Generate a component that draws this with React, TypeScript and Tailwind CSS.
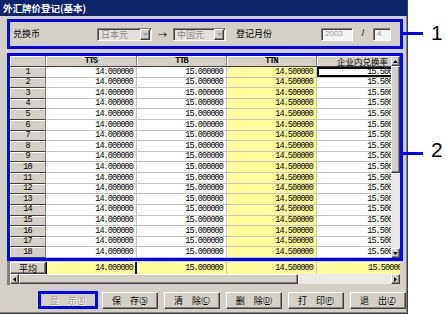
import React from 'react';

const raised =
  'bg-[#d4d0c8] border border-t-white border-l-white border-r-[#404040] border-b-[#404040] shadow-[inset_-1px_-1px_0_#808080]';
const sunken =
  'border border-t-[#808080] border-l-[#808080] border-r-white border-b-white shadow-[inset_1px_1px_0_#404040]';
const cjk = "font-['Noto_Sans_CJK_SC',sans-serif]";
const mono = "font-['Liberation_Mono',monospace] text-[8.5px] tracking-[-0.9px]";

const cols = ['w-[91px]', 'w-[90px]', 'w-[90px]', 'w-[92px]'];

const Tri = ({ dir, color = '#000' }: { dir: 'up' | 'down' | 'left' | 'right'; color?: string }) => {
  if (dir === 'up' || dir === 'down')
    return (
      <svg width="5" height="3" viewBox="0 0 5 3">
        <polygon points={dir === 'down' ? '0,0 5,0 2.5,3' : '0,3 5,3 2.5,0'} fill={color} />
      </svg>
    );
  return (
    <svg width="3" height="5" viewBox="0 0 3 5">
      <polygon points={dir === 'right' ? '0,0 0,5 3,2.5' : '3,0 3,5 0,2.5'} fill={color} />
    </svg>
  );
};

const Combo = ({ text, w }: { text: string; w: string }) => (
  <div className={`${w} h-[13px] flex items-center bg-[#e4e2dc] ${sunken}`}>
    <span className="flex-1 pl-[3px] text-[#8a8a8a] leading-none">{text}</span>
    <div className={`w-[10px] h-[11px] mr-px flex items-center justify-center ${raised}`}>
      <Tri dir="down" color="#9a9a9a" />
    </div>
  </div>
);

const Field = ({ text, w }: { text: string; w: string }) => (
  <div className={`${w} h-[13px] flex items-center bg-[#f4f4f4] ${sunken}`}>
    <span className="pl-[3px] text-[#9a9a9a] text-[8px] font-['Liberation_Sans',sans-serif] leading-none">{text}</span>
  </div>
);

const Button = ({ label, keyChar }: { label: string; keyChar: string }) => (
  <div className={`w-[56px] h-[17px] flex items-center justify-center text-[9px] leading-none text-black ${raised}`}>
    <span>{label}</span>
    <span className="text-[7px]">
      (<span className="underline">{keyChar}</span>)
    </span>
  </div>
);

export default function App() {
  const rows = Array.from({ length: 18 }, (_, i) => i + 1);

  return (
    <div className={`relative w-[446px] h-[314px] bg-white overflow-hidden ${cjk}`}>
      <div className="w-[408px] h-[314px] bg-[#d4d0c8] border-r border-b border-r-[#404040] border-b-[#404040] shadow-[inset_-1px_-1px_0_#808080] flex flex-col">
        <div className="h-[16px] bg-[#0a246a] text-white font-bold text-[9.5px] pl-[3px] flex items-center">
          外汇牌价登记(基本)
        </div>

        {/* section 1 */}
        <div className="ml-[7px] w-[396px] mt-[3px] h-[30px] border-[3px] border-[#0000ff] flex items-center text-[9px]">
          <span className="ml-[3px] w-[84px]">兑换币</span>
          <Combo text="日本元" w="w-[55px]" />
          <span className="w-[21px] text-center leading-none">→</span>
          <Combo text="中国元" w="w-[53px]" />
          <span className="ml-[10px] w-[85px]">登记月份</span>
          <Field text="2003" w="w-[32px]" />
          <span className="w-[20px] text-center font-['Liberation_Sans',sans-serif] text-[9px]">/</span>
          <Field text="4" w="w-[18px]" />
        </div>

        {/* section 2 grid */}
        <div className="ml-[7px] w-[396px] mt-[4px] h-[208px] border-[3px] border-[#0000ff] flex bg-white">
          <div className="flex-1 overflow-hidden flex flex-col">
            <div className="h-[11px] flex shrink-0">
              <div className="w-[36px] shrink-0 bg-[#d4d0c8] border-r border-b border-r-[#808080] border-b-[#404040] shadow-[inset_1px_1px_0_#fff]" />
              {['TTS', 'TTB', 'TTN'].map((h, i) => (
                <div
                  key={h}
                  className={`${cols[i]} shrink-0 bg-[#d4d0c8] border-r border-b border-r-[#808080] border-b-[#404040] shadow-[inset_1px_1px_0_#fff] flex items-center justify-center ${mono} font-bold leading-none`}
                >
                  {h}
                </div>
              ))}
              <div className="w-[92px] shrink-0 bg-[#d4d0c8] border-r border-b border-r-[#808080] border-b-[#404040] shadow-[inset_1px_1px_0_#fff] flex items-center justify-center text-[8.5px] leading-none">
                企业内兑换率
              </div>
            </div>
            <div className="flex-1 flex flex-col">
              {rows.map((n) => (
                <div key={n} className="flex-1 flex">
                  <div className={`w-[36px] shrink-0 bg-[#d4d0c8] border-r border-b border-r-[#808080] border-b-[#404040] shadow-[inset_1px_1px_0_#fff] flex items-center justify-center ${mono} leading-none`}>
                    {n}
                  </div>
                  <div className={`w-[91px] shrink-0 border-r border-b border-[#c4c4c4] flex items-center justify-end pr-[3px] ${mono} leading-none`}>
                    14.000000
                  </div>
                  <div className={`w-[90px] shrink-0 border-r border-b border-[#c4c4c4] flex items-center justify-end pr-[3px] ${mono} leading-none`}>
                    15.000000
                  </div>
                  <div className={`w-[90px] shrink-0 bg-[#ffff9b] border-r border-b border-[#c4c4c4] flex items-center justify-end pr-[3px] ${mono} leading-none`}>
                    14.500000
                  </div>
                  <div
                    className={`w-[92px] shrink-0 border-r border-b border-[#c4c4c4] flex items-center justify-end pr-[3px] ${mono} leading-none ${
                      n === 1 ? 'shadow-[inset_0_0_0_2px_#000]' : ''
                    }`}
                  >
                    15.500000
                  </div>
                </div>
              ))}
            </div>
          </div>
          {/* vertical scrollbar */}
          <div className="w-[9px] shrink-0 flex flex-col bg-[#ebe9e4]">
            <div className={`h-[10px] flex items-center justify-center ${raised}`}>
              <Tri dir="up" />
            </div>
            <div className={`h-[107px] ${raised}`} />
            <div className="flex-1" />
            <div className={`h-[10px] flex items-center justify-center ${raised}`}>
              <Tri dir="down" />
            </div>
          </div>
        </div>

        {/* average row + horizontal scrollbar */}
        <div className="ml-[7px] w-[396px] h-[24px] border-l-[3px] border-l-[#808080] border-r-[3px] border-r-[#d4d0c8] pt-px flex flex-col">
          <div className="h-[12px] flex overflow-hidden">
            <div className={`w-[36px] shrink-0 flex items-center justify-center text-[9px] leading-none ${raised}`}>平均</div>
            <div className={`w-[91px] shrink-0 bg-[#ffff9b] border-l border-l-black border-r-2 border-r-[#10106a] flex items-center justify-end pr-[2px] ${mono} leading-none`}>
              14.000000
            </div>
            <div className={`w-[90px] shrink-0 bg-[#ffff9b] border-r border-r-[#c4c4c4] flex items-center justify-end pr-[3px] ${mono} leading-none`}>
              15.000000
            </div>
            <div className={`w-[90px] shrink-0 bg-[#ffff9b] border-r border-r-[#c4c4c4] flex items-center justify-end pr-[3px] ${mono} leading-none`}>
              14.500000
            </div>
            <div className={`w-[92px] shrink-0 bg-[#ffff9b] flex items-center justify-end pr-[3px] ${mono} leading-none`}>
              15.500000
            </div>
          </div>
          <div className="h-[10px] flex bg-[#ebe9e4]">
            <div className={`w-[9px] flex items-center justify-center ${raised}`}>
              <Tri dir="left" />
            </div>
            <div className={`w-[279px] ${raised}`} />
            <div className="flex-1" />
            <div className={`w-[9px] flex items-center justify-center ${raised}`}>
              <Tri dir="right" />
            </div>
          </div>
        </div>

        {/* buttons */}
        <div className="mt-[6px] ml-[38px] flex items-center gap-[6px]">
          <div className="w-[60px] h-[18px] border-[3px] border-[#0000ff] flex items-center justify-center text-[9px] leading-none text-[#9a9a9a] [text-shadow:1px_1px_0_#fff] -mr-[2px]">
            <span>显　示</span>
            <span className="text-[7px]">(<span className="underline">X</span>)</span>
          </div>
          <Button label="保　存" keyChar="S" />
          <Button label="清　除" keyChar="C" />
          <Button label="删　除" keyChar="D" />
          <Button label="打　印" keyChar="P" />
          <Button label="退　出" keyChar="Z" />
        </div>
      </div>

      {/* annotation callouts */}
      <div className="absolute left-[403px] top-[32px] w-[20px] h-[3px] bg-[#0000ff]" />
      <div className="absolute left-[431px] top-[22px] text-[21px] leading-none font-['Liberation_Sans',sans-serif] text-black">1</div>
      <div className="absolute left-[403px] top-[152px] w-[20px] h-[3px] bg-[#0000ff]" />
      <div className="absolute left-[431px] top-[139px] text-[21px] leading-none font-['Liberation_Sans',sans-serif] text-black">2</div>
    </div>
  );
}
